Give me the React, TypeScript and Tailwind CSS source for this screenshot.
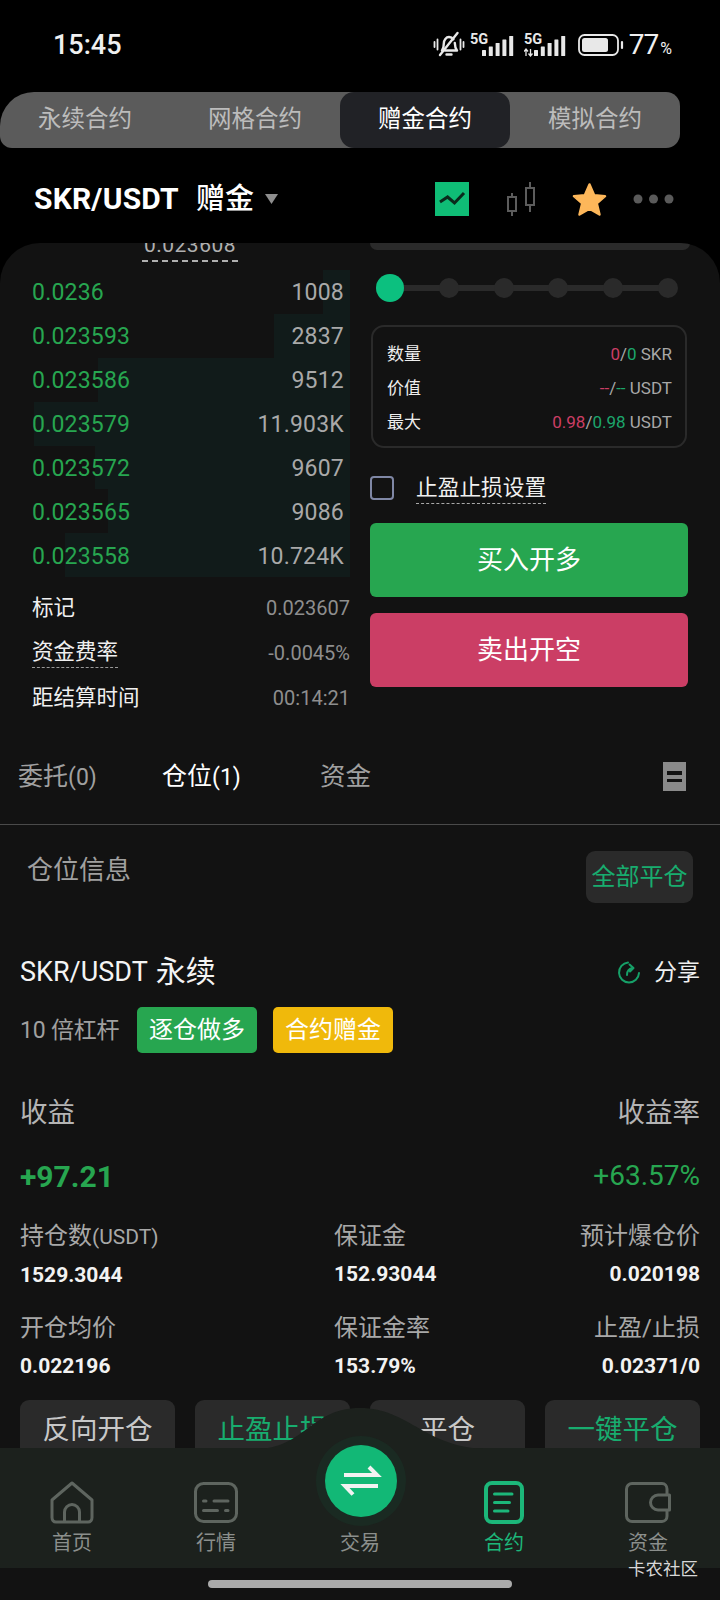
import React from "react";

const rows = [
  { p: "0.0236", q: "1008", left: 323 },
  { p: "0.023593", q: "2837", left: 274 },
  { p: "0.023586", q: "9512", left: 98 },
  { p: "0.023579", q: "11.903K", left: 34 },
  { p: "0.023572", q: "9607", left: 95 },
  { p: "0.023565", q: "9086", left: 108 },
  { p: "0.023558", q: "10.724K", left: 65 },
];

function Bell() {
  return (
    <svg width="32" height="28" viewBox="0 0 32 28" fill="none" stroke="#e8e8e8" strokeWidth="2.4" strokeLinecap="round" strokeLinejoin="round">
      <path d="M9 19.5c1.5-2 1.8-4 1.8-7 0-3.5 2.4-6.5 5.2-6.5 2 0 3.4.8 4.4 2.2M21.8 12c.1 3.500.8 5.800 2.200 7.500H12" />
      <path d="M13.500 23.500h5M7 24 24.500 2" />
      <path d="M1.500 11v5M4.500 8.500v10M27.500 8.500v10M30.500 11v5" strokeWidth="1.800" />
    </svg>
  );
}

function Signal({ arrows }: { arrows?: boolean }) {
  const x0 = arrows ? 10 : 12;
  return (
    <svg width="46" height="26" viewBox="0 0 46 26">
      <text x="0" y="12" fontSize="14.500" fontWeight="700" fill="#e8e8e8" fontFamily="Roboto, sans-serif">5G</text>
      {arrows && (
        <path d="M2 17v7M0 19.500l2-2.500 2 2.500M6.500 17v7M4.500 21.500l2 2.500 2-2.500" stroke="#e8e8e8" strokeWidth="1.300" fill="none" />
      )}
      {[0, 1, 2, 3, 4].map((i) => (
        <rect key={i} x={x0 + i * 6.800} y={18 - i * 3.500} width="4" height={6 + i * 3.500} fill="#e8e8e8" rx="0.500" />
      ))}
    </svg>
  );
}

function Battery() {
  return (
    <svg width="46" height="22" viewBox="0 0 46 22" fill="none">
      <rect x="1" y="1" width="39" height="20" rx="5.500" stroke="#e8e8e8" strokeWidth="1.800" />
      <rect x="4" y="4" width="26" height="14" rx="2.500" fill="#e8e8e8" />
      <path d="M44 8v6" stroke="#e8e8e8" strokeWidth="2.200" strokeLinecap="round" />
    </svg>
  );
}

function HomeIcon() {
  return (
    <svg width="44" height="43" viewBox="0 0 44 43" fill="none" stroke="#5e655f" strokeWidth="3" strokeLinejoin="round">
      <path d="M2 19 22 2l20 17v17.500c0 2.500-1.500 4.500-4 4.500H6c-2.500 0-4-2-4-4.500z" />
      <path d="M14.500 41V31c0-4 3.500-7.500 7.500-7.500s7.500 3.500 7.500 7.500v10" />
    </svg>
  );
}

function MarketIcon() {
  return (
    <svg width="44" height="41" viewBox="0 0 44 41" fill="none" stroke="#5e655f" strokeWidth="3" strokeLinecap="round">
      <rect x="1.500" y="1.500" width="41" height="38" rx="8" />
      <path d="M9.500 19h2.500M20 19h14M9.500 28.500h14M31.500 28.500H34" />
    </svg>
  );
}

function ContractIcon() {
  return (
    <svg width="40" height="43" viewBox="0 0 40 43" fill="none" stroke="#1cb77a" strokeLinecap="round">
      <rect x="2" y="2" width="36" height="39" rx="6" strokeWidth="4" />
      <path d="M10.500 13H28M10.500 21.500h15M10.500 30h13.500" strokeWidth="3" />
    </svg>
  );
}

function WalletIcon() {
  return (
    <svg width="46" height="41" viewBox="0 0 46 41" fill="none" stroke="#5e655f" strokeWidth="3" strokeLinejoin="round">
      <path d="M42 13V7c0-3-2-5.500-5-5.500H7c-3 0-5.500 2.500-5.500 5.500v27c0 3 2.500 5.500 5.500 5.500h30c3 0 5-2.500 5-5.500v-6" />
      <path d="M44.500 13H33c-4 0-7.500 3.400-7.500 7.500S29 28 33 28h11.500z" />
    </svg>
  );
}

function NavItem({ icon, label, active }: { icon?: React.ReactNode; label: string; active?: boolean }) {
  return (
    <div className="flex flex-col items-center">
      <div className="flex h-[43px] items-center">{icon}</div>
      <div className={`mt-[5px] text-[20px] leading-[28px] ${active ? "text-[#1cb77a]" : "text-[#8b8f8c]"}`}>{label}</div>
    </div>
  );
}

function Stat({ label, value, className }: { label: React.ReactNode; value: string; className?: string }) {
  return (
    <div className={className}>
      <div className="text-[24px] leading-[32px] text-[#a8a8a8]">{label}</div>
      <div className="mt-[8px] text-[21px] leading-[28px] font-bold text-[#f2f2f2]">{value}</div>
    </div>
  );
}

export default function App() {
  return (
    <div className="relative h-[1600px] w-[720px] overflow-hidden bg-black font-['Roboto','Noto_Sans_CJK_SC',sans-serif] text-white">
      {/* status bar */}
      <div className="flex h-[92px] items-center justify-between pr-[48px] pb-[2px] pl-[53px]">
        <div className="text-[27px] leading-none font-medium text-[#f0f0f0]">15:45</div>
        <div className="flex items-center">
          <Bell />
          <div className="ml-[5px]"><Signal /></div>
          <div className="ml-[8px]"><Signal arrows /></div>
          <div className="ml-[8px]"><Battery /></div>
          <div className="ml-[5px] flex items-baseline text-[#f0f0f0]">
            <span className="text-[28px] leading-none tracking-[-1px]">77</span>
            <span className="ml-[2px] text-[16px] leading-none">%</span>
          </div>
        </div>
      </div>

      {/* top tabs */}
      <div className="flex h-[56px] w-[680px] rounded-[14px] rounded-tl-[34px] rounded-bl-[12px] bg-[#5b5b5b] text-[23.500px] text-[#bcbcbc]">
        <div className="flex w-[170px] items-center justify-center">永续合约</div>
        <div className="flex w-[170px] items-center justify-center">网格合约</div>
        <div className="flex w-[170px] items-center justify-center rounded-[14px] bg-[#212226] text-white">赠金合约</div>
        <div className="flex w-[170px] items-center justify-center">模拟合约</div>
      </div>

      {/* pair header */}
      <div className="flex h-[95px] items-center pt-[7px] pl-[34px]">
        <span className="w-[162px] text-[30px] leading-none font-bold tracking-[0.2px]">SKR/USDT</span>
        <span className="text-[29px] leading-none font-medium">赠金</span>
        <svg className="ml-[11px]" width="13" height="10" viewBox="0 0 13 10"><path d="M0 0h13L6.500 10z" fill="#8e8e8e" /></svg>
        <svg className="ml-[157px]" width="34" height="34" viewBox="0 0 34 34">
          <rect width="34" height="34" fill="#0fbd76" />
          <path d="M5 20l7.600-5 6.900 6L29 11" fill="none" stroke="#0a2a1c" strokeWidth="3" />
        </svg>
        <svg className="ml-[38px]" width="28" height="34" viewBox="0 0 28 34" fill="none" stroke="#5c5c5c" strokeWidth="2">
          <rect x="1" y="15" width="8" height="14" />
          <path d="M5 11v4M5 29v5" />
          <rect x="19" y="6" width="8" height="17" />
          <path d="M23 0v6M23 23v7" />
        </svg>
        <svg className="ml-[37px]" width="35" height="35" viewBox="0 0 36 35">
          <path d="M18 2l4.800 11 11.200 1-8.500 7.500 2.800 11.500L18 27l-10.300 6 2.800-11.500L2 14l11.200-1z" fill="#fdb75a" stroke="#fdb75a" strokeWidth="2.500" strokeLinejoin="round" />
        </svg>
        <svg className="ml-[26px]" width="41" height="10" viewBox="0 0 41 10" fill="#5a5a5a">
          <circle cx="5" cy="5" r="4.500" /><circle cx="20.500" cy="5" r="4.500" /><circle cx="36" cy="5" r="4.500" />
        </svg>
      </div>

      {/* main panel */}
      <div className="h-[1357px] overflow-hidden rounded-t-[40px] bg-[#121212]">
        <div className="flex h-[487px]">
          <div className="w-[350px]">
            <div className="h-[27px] overflow-hidden pl-[142px]">
              <div className="-mt-[12px] w-[96px] border-b-[2px] border-dashed border-[#b0b0b0] text-center text-[21px] leading-[29px] tracking-[0.5px] text-[#b0b0b0]">0.023608</div>
            </div>
            <div>
              {rows.map((r) => (
                <div key={r.p} className="relative flex h-[43.900px] items-center justify-between pt-[3px] pr-[6px] pl-[32px] text-[23px]">
                  <div className="absolute top-0 right-0 bottom-0 bg-[#111b1a]" style={{ left: r.left }} />
                  <span className="relative tracking-[0.200px] text-[#27a650]">{r.p}</span>
                  <span className="relative tracking-[0.200px] text-[#a9a9a9]">{r.q}</span>
                </div>
              ))}
            </div>
            <div className="mt-[9px] pl-[32px]">
              <div className="flex h-[44px] items-center justify-between">
                <span className="text-[21.500px] leading-[30px] text-[#f0f0f0]">标记</span>
                <span className="text-[20px] text-[#8e8e8e]">0.023607</span>
              </div>
              <div className="flex h-[45px] items-center justify-between">
                <span className="border-b-[1.500px] border-dashed border-[#999999] text-[21.500px] leading-[30px] text-[#f0f0f0]">资金费率</span>
                <span className="text-[20px] text-[#8e8e8e]">-0.0045%</span>
              </div>
              <div className="flex h-[45px] items-center justify-between">
                <span className="text-[21.500px] leading-[30px] text-[#f0f0f0]">距结算时间</span>
                <span className="text-[20px] text-[#8e8e8e]">00:14:21</span>
              </div>
            </div>
          </div>
          <div className="w-[370px] pl-[20px]">
            <div className="h-[7px] w-[320px] rounded-b-[14px] bg-[#2a2a2a]" />
            <div className="relative mt-[24px] ml-[6px] flex h-[28px] w-[302px] items-center justify-between">
              <div className="absolute right-[1px] left-[2px] h-[6px] bg-[#2a2a2a]" />
              <div className="relative h-[28px] w-[28px] rounded-full bg-[#0cc07f]" />
              <div className="relative h-[20px] w-[20px] rounded-full bg-[#2a2a2a]" />
              <div className="relative h-[20px] w-[20px] rounded-full bg-[#2a2a2a]" />
              <div className="relative h-[20px] w-[20px] rounded-full bg-[#2a2a2a]" />
              <div className="relative h-[20px] w-[20px] rounded-full bg-[#2a2a2a]" />
              <div className="relative h-[20px] w-[20px] rounded-full bg-[#2a2a2a]" />
            </div>
            <div className="mt-[23px] ml-[1px] flex h-[123px] w-[316px] flex-col justify-center rounded-[13px] border-[2px] border-[#2a2a2a] pt-[2px] pr-[13px] pl-[14px] text-[17px] leading-[34px]">
              <div className="flex justify-between">
                <span className="text-[#eeeeee]">数量</span>
                <span className="text-[#a8a8a8]"><span className="text-[#cb3e65]">0</span>/<span className="text-[#1ca66c]">0</span> SKR</span>
              </div>
              <div className="flex justify-between">
                <span className="text-[#eeeeee]">价值</span>
                <span className="text-[#a8a8a8]"><span className="text-[#cb3e65]">--</span>/<span className="text-[#1ca66c]">--</span> USDT</span>
              </div>
              <div className="flex justify-between">
                <span className="text-[#eeeeee]">最大</span>
                <span className="text-[#a8a8a8]"><span className="text-[#cb3e65]">0.98</span>/<span className="text-[#1ca66c]">0.98</span> USDT</span>
              </div>
            </div>
            <div className="mt-[22px] flex h-[35px] items-center">
              <div className="h-[24px] w-[24px] rounded-[4px] border-[2px] border-[#7f87a5]" />
              <div className="ml-[22px] border-b-[1.500px] border-dashed border-[#aaaaaa] text-[21.700px] leading-[31px] text-[#f0f0f0]">止盈止损设置</div>
            </div>
            <div className="mt-[18px] flex h-[74px] w-[318px] items-center justify-center rounded-[6px] bg-[#27a650] text-[26px]">买入开多</div>
            <div className="mt-[16px] flex h-[74px] w-[318px] items-center justify-center rounded-[6px] bg-[#cb3e65] text-[26px]">卖出开空</div>
          </div>
        </div>

        {/* list tabs */}
        <div className="flex h-[95px] items-center border-b border-[#4a4a4a] pb-[1px] pl-[18px]">
          <div className="w-[144px] text-[25px] leading-none text-[#a0a0a0]">委托<span className="text-[23px]">(0)</span></div>
          <div className="w-[158px] text-[25px] leading-none text-white">仓位<span className="text-[23px]">(1)</span></div>
          <div className="text-[25.500px] leading-none text-[#a0a0a0]">资金</div>
          <div className="ml-auto mr-[34px] flex h-[29px] w-[23px] flex-col items-center justify-center gap-[4px] bg-[#8a8a8a]">
            <div className="h-[3.500px] w-[15px] bg-[#121212]" />
            <div className="h-[3.500px] w-[15px] bg-[#121212]" />
          </div>
        </div>

        {/* positions */}
        <div className="px-[20px]">
          <div className="mt-[26px] flex h-[52px] items-start justify-between px-[7px]">
            <div className="pt-[2px] text-[26px] leading-[34px] text-[#a0a0a0]">仓位信息</div>
            <div className="flex h-[52px] w-[107px] items-center justify-center rounded-[9px] bg-[#2a2a2a] text-[24px] text-[#18ad6f]">全部平仓</div>
          </div>

          <div className="mt-[49px] flex h-[40px] items-center justify-between">
            <div className="flex items-center text-[#f4f4f4]">
              <span className="text-[27px] leading-none">SKR/USDT</span>
              <span className="ml-[8px] text-[30px] leading-none">永续</span>
            </div>
            <div className="flex items-center">
              <svg width="24" height="24" viewBox="0 0 24 24" fill="none" stroke="#16a068" strokeWidth="2" strokeLinecap="round" strokeLinejoin="round">
                <path d="M11 2.500A10 10 0 1 0 22 13" />
                <path d="M10 15c0-4 2-6.500 6-7M12.500 4.500 16.500 8l-3.500 3.500" />
              </svg>
              <div className="ml-[13px] text-[23px] leading-none text-[#f0f0f0]">分享</div>
            </div>
          </div>

          <div className="mt-[15px] flex h-[46px] items-center">
            <div className="w-[117px] text-[23px] leading-none tracking-[-0.2px] text-[#a0a0a0]">10 倍杠杆</div>
            <div className="flex h-[46px] w-[120px] items-center justify-center rounded-[5px] bg-[#27a650] text-[24px]">逐仓做多</div>
            <div className="ml-[16px] flex h-[46px] w-[120px] items-center justify-center rounded-[5px] bg-[#f0b90b] text-[24px]">合约赠金</div>
          </div>

          <div className="mt-[42px] flex h-[36px] items-center justify-between text-[27.500px] text-[#b4b4b4]">
            <span>收益</span>
            <span>收益率</span>
          </div>
          <div className="mt-[25px] flex h-[40px] items-center justify-between text-[#27a650]">
            <span className="text-[30px] font-bold">+97.21</span>
            <span className="text-[28px]">+63.57%</span>
          </div>

          <div className="mt-[24px] flex justify-between">
            <Stat className="w-[314px]" label={<>持仓数<span className="text-[21px]">(USDT)</span></>} value="1529.3044" />
            <Stat className="flex-1" label="保证金" value="152.93044" />
            <Stat className="text-right" label="预计爆仓价" value="0.020198" />
          </div>
          <div className="mt-[23px] flex justify-between">
            <Stat className="w-[314px]" label="开仓均价" value="0.022196" />
            <Stat className="flex-1" label="保证金率" value="153.79%" />
            <Stat className="text-right" label="止盈/止损" value="0.02371/0" />
          </div>

          <div className="mt-[20px] flex justify-between text-[27.500px]">
            <div className="flex h-[70px] w-[155px] items-center justify-center rounded-[9px] bg-[#2a2a2a] pb-[11px] text-[#c8c8c8]">反向开仓</div>
            <div className="flex h-[70px] w-[155px] items-center justify-center rounded-[9px] bg-[#2a2a2a] pb-[11px] text-[#18ad6f]">止盈止损</div>
            <div className="flex h-[70px] w-[155px] items-center justify-center rounded-[9px] bg-[#2a2a2a] pb-[11px] text-[#c8c8c8]">平仓</div>
            <div className="flex h-[70px] w-[155px] items-center justify-center rounded-[9px] bg-[#2a2a2a] pb-[11px] text-[#18ad6f]">一键平仓</div>
          </div>
        </div>
      </div>

      {/* bottom nav overlay */}
      <div className="absolute right-0 bottom-[32px] left-0 h-[120px] bg-[#1c211d] pt-[33px]">
        <svg className="absolute -top-[40px] left-0" width="720" height="41" viewBox="0 0 720 41">
          <path d="M255 41C305 41 310 0 360 0C410 0 425 41 490 41Z" fill="#1c211d" />
        </svg>
        <div className="absolute -top-[12px] left-[316px] flex h-[90px] w-[90px] items-center justify-center rounded-full bg-[#1a2a22]">
          <svg width="72" height="72" viewBox="0 0 72 72">
            <circle cx="36" cy="36" r="36" fill="#12b876" />
            <path d="M19 30h33l-8-8M53 41H20l8 8.500" fill="none" stroke="#f2f2f2" strokeWidth="4" />
          </svg>
        </div>
        <div className="grid grid-cols-5">
          <NavItem icon={<HomeIcon />} label="首页" />
          <NavItem icon={<MarketIcon />} label="行情" />
          <NavItem label="交易" />
          <NavItem icon={<ContractIcon />} label="合约" active />
          <NavItem icon={<WalletIcon />} label="资金" />
        </div>
      </div>
      <div className="absolute right-[22px] bottom-[19px] text-[17.500px] leading-[24px] text-[#d8d8d8]">卡农社区</div>
      <div className="absolute bottom-[12px] left-[208px] h-[8px] w-[304px] rounded-full bg-[#aaaaaa]" />
    </div>
  );
}
